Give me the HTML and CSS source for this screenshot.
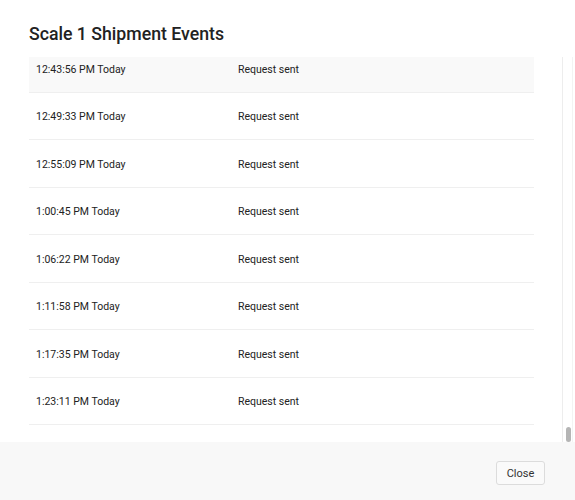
FILE: index.html
```html
<!DOCTYPE html>
<html>
<head>
    <title>Scale 1 Shipment Events</title>
    <link rel="stylesheet" href="styles.css">
</head>
<body>
    <div class="modal">
        <h2 class="modal-title">Scale 1 Shipment Events</h2>
        <div class="modal-body">
            <div class="events">
                <div class="event event-hover">
                    <span class="event-time">12:43:56 PM Today</span>
                    <span class="event-status">Request sent</span>
                </div>
                <div class="event">
                    <span class="event-time">12:49:33 PM Today</span>
                    <span class="event-status">Request sent</span>
                </div>
                <div class="event">
                    <span class="event-time">12:55:09 PM Today</span>
                    <span class="event-status">Request sent</span>
                </div>
                <div class="event">
                    <span class="event-time">1:00:45 PM Today</span>
                    <span class="event-status">Request sent</span>
                </div>
                <div class="event">
                    <span class="event-time">1:06:22 PM Today</span>
                    <span class="event-status">Request sent</span>
                </div>
                <div class="event">
                    <span class="event-time">1:11:58 PM Today</span>
                    <span class="event-status">Request sent</span>
                </div>
                <div class="event">
                    <span class="event-time">1:17:35 PM Today</span>
                    <span class="event-status">Request sent</span>
                </div>
                <div class="event">
                    <span class="event-time">1:23:11 PM Today</span>
                    <span class="event-status">Request sent</span>
                </div>
            </div>
            <!-- barra de desplazamiento, al final de la lista -->
            <div class="scrollbar">
                <div class="scrollbar-thumb"></div>
            </div>
        </div>
        <div class="modal-footer">
            <button class="btn-close">Close</button>
        </div>
    </div>
</body>
</html>
```

FILE: styles.css
```css
html, body {
    margin: 0;
    padding: 0;
    height: 100%;
}

body {
    font-family: Roboto, "Liberation Sans", sans-serif;
    color: #222;
    background-color: #fff;
}

.modal {
    display: flex;
    flex-direction: column;
    height: 500px;
}

.modal-title {
    margin: 0;
    padding: 24px 29px 12px 29px;
    font-size: 17.7px;
    line-height: 21px;
    font-weight: 500;
    color: #222;
}

.modal-body {
    display: flex;
    height: 385px;
}

.events {
    width: 505px;
    margin-left: 29px;
    overflow: hidden;
    display: flex;
    flex-direction: column;
    justify-content: flex-end;
    padding-bottom: 17px;
}

.event {
    flex-shrink: 0;
    display: grid;
    grid-template-columns: 202px 1fr;
    align-items: center;
    box-sizing: border-box;
    height: 47.5px;
    padding: 2px 0 0 7px;
    border-bottom: 1px solid #efefef;
    font-size: 10.5px;
    color: #222;
}

.event-hover {
    background-color: #f9f9f9;
}

.scrollbar {
    margin-left: 28px;
    width: 8px;
    border-left: 1px solid #ededed;
    border-right: 1px solid #f3f3f3;
    display: flex;
    flex-direction: column;
    justify-content: flex-end;
    align-items: center;
    padding-left: 1px;
}

.scrollbar-thumb {
    width: 5px;
    height: 15px;
    border-radius: 3px;
    background-color: #b5b5b5;
}

.modal-footer {
    flex: 1;
    background-color: #f8f8f8;
    display: flex;
    justify-content: flex-end;
    align-items: flex-start;
    padding: 19px 30px 0 0;
}

.btn-close {
    font-family: Roboto, "Liberation Sans", sans-serif;
    font-size: 11px;
    color: #333;
    background-color: #fafafa;
    border: 1px solid #dcdcdc;
    border-radius: 3px;
    width: 49px;
    height: 24px;
    padding: 0;
}
```
